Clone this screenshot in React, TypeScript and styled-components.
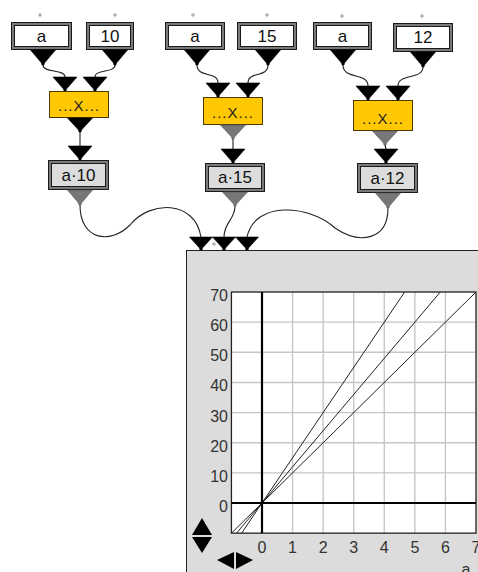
import React from 'react';
import styled, { createGlobalStyle } from 'styled-components';

const Global = createGlobalStyle`
  html, body { margin: 0; padding: 0; background: #fff; }
  body { font-family: "Liberation Sans", Arial, sans-serif; }
`;

const Canvas = styled.div`
  position: relative;
  width: 478px;
  height: 572px;
  overflow: hidden;
  background: #fff;
`;

const Node = styled.div<{ $x: number; $y: number; $w: number; $h: number }>`
  position: absolute;
  left: ${(p) => p.$x}px;
  top: ${(p) => p.$y}px;
  width: ${(p) => p.$w}px;
  height: ${(p) => p.$h}px;
  box-sizing: border-box;
`;

const ValueBox = styled(Node)`
  border: 1px solid #1a1a1a;
  background: #7a7a7a;
  padding: 2px;
  display: flex;
`;

const ValueInner = styled.div<{ $out?: boolean }>`
  flex: 1;
  border: 1px solid #1a1a1a;
  background: ${(p) => (p.$out ? '#dcdcdc' : '#ffffff')};
  display: flex;
  align-items: center;
  justify-content: center;
  font-size: 17px;
  line-height: 1;
  color: #111;
`;

const OpBox = styled(Node)`
  border: 1px solid #4a3a00;
  background: #ffc800;
  display: flex;
  align-items: flex-end;
  justify-content: center;
  padding-bottom: 4px;
  font-size: 15px;
  line-height: 1;
  color: #222;
  letter-spacing: 1px;
`;

const Panel = styled(Node)`
  background: #dcdcdc;
  border-left: 1px solid #222;
  border-top: 1px solid #222;
`;

const ChartSvg = styled.svg`
  display: block;
  font-family: "Liberation Sans", Arial, sans-serif;
`;

const Overlay = styled.svg`
  position: absolute;
  left: 0;
  top: 0;
  pointer-events: none;
`;

type V = { x: number; y: number; w: number; h: number; label: string };

const inputs: V[] = [
  { x: 11, y: 22, w: 61, h: 28, label: 'a' },
  { x: 86, y: 22, w: 48, h: 28, label: '10' },
  { x: 165, y: 22, w: 60, h: 28, label: 'a' },
  { x: 237, y: 22, w: 60, h: 28, label: '15' },
  { x: 313, y: 22, w: 59, h: 28, label: 'a' },
  { x: 393, y: 23, w: 60, h: 29, label: '12' },
];

const ops = [
  { x: 49, y: 91, w: 60, h: 27 },
  { x: 203, y: 97, w: 60, h: 28 },
  { x: 353, y: 100, w: 60, h: 31 },
];

const outputs: V[] = [
  { x: 48, y: 160, w: 61, h: 30, label: 'a·10' },
  { x: 205, y: 163, w: 60, h: 29, label: 'a·15' },
  { x: 357, y: 163, w: 61, h: 30, label: 'a·12' },
];

const tri = (cx: number, top: number, w: number, h: number) =>
  `${cx - w / 2},${top} ${cx + w / 2},${top} ${cx + 1.5},${top + h - 2} ${cx + 1},${top + h} ${cx - 1},${top + h} ${cx - 1.5},${top + h - 2}`;

type T = { cx: number; top: number; w: number; h: number; fill: string };
const ports: T[] = [
  // outputs of input boxes
  { cx: 43, top: 50, w: 25, h: 15, fill: '#000' },
  { cx: 115, top: 50, w: 25, h: 15, fill: '#000' },
  { cx: 197, top: 50, w: 25, h: 15, fill: '#000' },
  { cx: 268, top: 50, w: 25, h: 15, fill: '#000' },
  { cx: 343, top: 50, w: 25, h: 15, fill: '#000' },
  { cx: 423, top: 52, w: 25, h: 15, fill: '#000' },
  // op inputs
  { cx: 65, top: 77, w: 24, h: 14, fill: '#000' },
  { cx: 95, top: 77, w: 24, h: 14, fill: '#000' },
  { cx: 218, top: 83, w: 24, h: 14, fill: '#000' },
  { cx: 248, top: 83, w: 24, h: 14, fill: '#000' },
  { cx: 368, top: 86, w: 24, h: 14, fill: '#000' },
  { cx: 398, top: 86, w: 24, h: 14, fill: '#000' },
  // op outputs
  { cx: 80, top: 118, w: 25, h: 14, fill: '#000' },
  { cx: 233, top: 125, w: 25, h: 14, fill: '#777' },
  { cx: 385, top: 131, w: 25, h: 14, fill: '#777' },
  // result inputs
  { cx: 80, top: 146, w: 24, h: 14, fill: '#000' },
  { cx: 233, top: 149, w: 24, h: 14, fill: '#000' },
  { cx: 386, top: 149, w: 24, h: 14, fill: '#000' },
  // result outputs
  { cx: 80, top: 190, w: 25, h: 15, fill: '#777' },
  { cx: 235, top: 192, w: 25, h: 14, fill: '#777' },
  { cx: 388, top: 193, w: 25, h: 15, fill: '#777' },
  // chart inputs
  { cx: 201, top: 237, w: 23, h: 13, fill: '#000' },
  { cx: 224, top: 237, w: 23, h: 13, fill: '#000' },
  { cx: 247, top: 237, w: 23, h: 13, fill: '#000' },
];

const wires = [
  'M43 65 C43 73, 65 69, 65 77',
  'M115 65 C115 73, 95 69, 95 77',
  'M197 65 C197 78, 218 71, 218 83',
  'M268 65 C268 78, 248 71, 248 83',
  'M343 65 C343 80, 368 72, 368 86',
  'M423 67 C423 80, 398 73, 398 86',
  'M80 131 L80 146',
  'M233 138 L233 149',
  'M385 145 L386 149',
  'M80 205 C80 240, 110 245, 130 225 C150 200, 195 200, 201 237',
  'M235 206 C235 220, 224 222, 224 237',
  'M388 208 C388 240, 360 245, 335 228 C310 205, 255 200, 247 237',
];

const plus: [number, number][] = [
  [40, 15], [115, 15], [193, 15], [267, 15], [342, 16], [422, 16], [214, 244],
];

// chart geometry (page coordinates)
const X0 = 262;
const UX = 30.57;
const Y0 = 503;
const UY = 3.014;
const px = (a: number) => X0 + a * UX;
const py = (v: number) => Y0 - v * UY;
const L = px(-1);
const R = px(7);
const TOP = py(70);
const BOT = py(-10);

const slopes = [10, 12, 15];

function Chart() {
  const vGrid = [1, 2, 3, 4, 5, 6];
  const hGrid = [10, 20, 30, 40, 50, 60];
  const yLabels = [70, 60, 50, 40, 30, 20, 10, 0];
  const xLabels = [0, 1, 2, 3, 4, 5, 6, 7];
  return (
    <ChartSvg width={291} height={321} viewBox="187 251 291 321">
      <rect x={L} y={TOP} width={R - L} height={BOT - TOP} fill="#fff" />
      {vGrid.map((a) => (
        <line key={'v' + a} x1={px(a)} x2={px(a)} y1={TOP} y2={BOT} stroke="#c6c6c6" strokeWidth={1.4} />
      ))}
      {hGrid.map((v) => (
        <line key={'h' + v} x1={L} x2={R} y1={py(v)} y2={py(v)} stroke="#c6c6c6" strokeWidth={1.4} />
      ))}
      {slopes.map((k) => {
        const a1 = Math.max(-1, -10 / k);
        const a2 = Math.min(7, 70 / k);
        return (
          <line key={'l' + k} x1={px(a1)} y1={py(k * a1)} x2={px(a2)} y2={py(k * a2)} stroke="#222" strokeWidth={1} />
        );
      })}
      <rect x={L} y={TOP} width={R - L} height={BOT - TOP} fill="none" stroke="#222" strokeWidth={1.3} />
      <line x1={X0} x2={X0} y1={TOP} y2={BOT} stroke="#000" strokeWidth={2.2} />
      <line x1={L} x2={R} y1={Y0} y2={Y0} stroke="#000" strokeWidth={2.2} />
      {yLabels.map((v) => (
        <text key={'yl' + v} x={228} y={py(v) + 9} textAnchor="end" fontSize={16} fill="#333">
          {v}
        </text>
      ))}
      {xLabels.map((a) => (
        <text key={'xl' + a} x={px(a)} y={553} textAnchor="middle" fontSize={16} fill="#333">
          {a}
        </text>
      ))}
      <text x={466} y={575} textAnchor="middle" fontSize={16} fill="#333">a</text>
      {/* vertical scroll arrows */}
      <polygon points="202,518 212,535 192,535" fill="#000" />
      <polygon points="192,537 212,537 202,553" fill="#000" />
      {/* horizontal scroll arrows */}
      <polygon points="217,560 234,552 234,569" fill="#000" />
      <polygon points="236,552 236,569 253,560" fill="#000" />
    </ChartSvg>
  );
}

export default function App() {
  return (
    <>
      <Global />
      <Canvas>
        <Panel $x={186} $y={250} $w={292} $h={322}>
          <Chart />
        </Panel>
        {inputs.map((b, i) => (
          <ValueBox key={'in' + i} $x={b.x} $y={b.y} $w={b.w} $h={b.h}>
            <ValueInner>{b.label}</ValueInner>
          </ValueBox>
        ))}
        {ops.map((o, i) => (
          <OpBox key={'op' + i} $x={o.x} $y={o.y} $w={o.w} $h={o.h}>
            ...X...
          </OpBox>
        ))}
        {outputs.map((b, i) => (
          <ValueBox key={'out' + i} $x={b.x} $y={b.y} $w={b.w} $h={b.h}>
            <ValueInner $out>{b.label}</ValueInner>
          </ValueBox>
        ))}
        <Overlay width={478} height={572} viewBox="0 0 478 572">
          {wires.map((d, i) => (
            <path key={'w' + i} d={d} fill="none" stroke="#222" strokeWidth={1.1} />
          ))}
          {ports.map((t, i) => (
            <polygon key={'p' + i} points={tri(t.cx, t.top, t.w, t.h)} fill={t.fill} stroke={t.fill === '#000' ? '#000' : '#555'} strokeWidth={0.6} />
          ))}
          {plus.map(([x, y], i) => (
            <g key={'pl' + i} stroke="#999" strokeWidth={1}>
              <line x1={x - 2} x2={x + 2} y1={y} y2={y} />
              <line x1={x} x2={x} y1={y - 2} y2={y + 2} />
            </g>
          ))}
        </Overlay>
      </Canvas>
    </>
  );
}
